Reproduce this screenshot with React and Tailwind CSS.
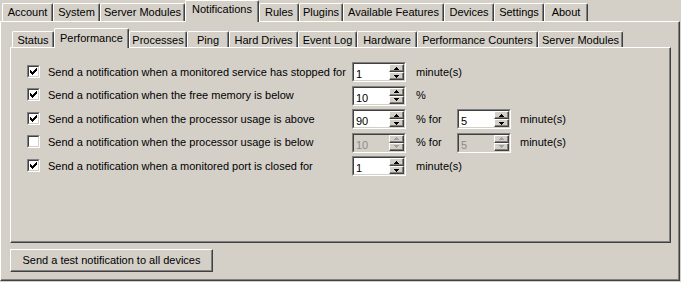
import React from "react";

const FONT = { fontFamily: '"Liberation Sans", Arial, sans-serif' };

function Tab({ label, w, selected, small }) {
  const base =
    "flex justify-center border-t border-l border-r border-t-white border-l-white border-r-[#404040] rounded-tl-[2px] rounded-tr-[2px] shadow-[inset_-1px_0_0_#808080] bg-[#d4d0c8] whitespace-nowrap text-black";
  if (selected) {
    return (
      <div
        className={`${base} relative z-10 -mb-px ${small ? "h-[20px] pt-[3px]" : "h-[22px] pt-[2px]"}`}
        style={{ width: w }}
      >
        {label}
      </div>
    );
  }
  return (
    <div
      className={`${base} ${small ? "h-[16px] pt-[2px]" : "h-[18px] pt-[2px]"}`}
      style={{ width: w }}
    >
      {label}
    </div>
  );
}

function Check({ checked }) {
  const px = [
    [6, 0], [5, 1], [6, 1], [0, 2], [4, 2], [5, 2], [6, 2],
    [0, 3], [1, 3], [3, 3], [4, 3], [5, 3],
    [0, 4], [1, 4], [2, 4], [3, 4], [4, 4],
    [1, 5], [2, 5], [3, 5], [2, 6],
  ];
  return (
    <div className="w-[13px] h-[13px] shrink-0 border border-t-[#808080] border-l-[#808080] border-r-white border-b-white">
      <div className="w-full h-full bg-white border border-t-[#404040] border-l-[#404040] border-r-[#d4d0c8] border-b-[#d4d0c8] flex items-center justify-center">
        {checked && (
          <svg width="7" height="7" viewBox="0 0 7 7" shapeRendering="crispEdges">
            {px.map(([x, y], i) => (
              <rect key={i} x={x} y={y} width="1" height="1" fill="#000" />
            ))}
          </svg>
        )}
      </div>
    </div>
  );
}

function SpinBtn({ up, disabled }) {
  const c = disabled ? "#a0a0a0" : "#000";
  return (
    <div className="h-[8px] w-[15px] border border-t-white border-l-white border-r-[#404040] border-b-[#404040] bg-[#d4d0c8] shadow-[inset_-1px_-1px_0_#808080] flex items-center justify-center">
      <svg width="5" height="3" viewBox="0 0 5 3" shapeRendering="crispEdges">
        {up ? (
          <>
            <rect x="2" y="0" width="1" height="1" fill={c} />
            <rect x="1" y="1" width="3" height="1" fill={c} />
            <rect x="0" y="2" width="5" height="1" fill={c} />
          </>
        ) : (
          <>
            <rect x="0" y="0" width="5" height="1" fill={c} />
            <rect x="1" y="1" width="3" height="1" fill={c} />
            <rect x="2" y="2" width="1" height="1" fill={c} />
          </>
        )}
      </svg>
    </div>
  );
}

function Spinner({ value, disabled }) {
  return (
    <div className="w-[54px] h-[20px] shrink-0 border border-t-[#808080] border-l-[#808080] border-r-white border-b-white">
      <div
        className={`w-full h-full flex items-stretch border border-t-[#404040] border-l-[#404040] border-r-[#d4d0c8] border-b-[#d4d0c8] ${disabled ? "bg-[#d4d0c8]" : "bg-white"}`}
      >
        <div
          className={`flex-1 pl-[2px] pt-[3px] leading-[14px] ${disabled ? "text-[#8a8a8a]" : "text-black"}`}
        >
          {value}
        </div>
        <div className="flex flex-col">
          <SpinBtn up disabled={disabled} />
          <SpinBtn disabled={disabled} />
        </div>
      </div>
    </div>
  );
}

function Row({ checked, label, v1, mid, v2, tail, disabled }) {
  return (
    <div className="flex items-center h-[20px]">
      <div className="w-[13px] -mt-[2px]">
        <Check checked={checked} />
      </div>
      <div className="ml-[8px] w-[304px] whitespace-nowrap">{label}</div>
      <Spinner value={v1} disabled={disabled} />
      <div className="ml-[10px] w-[41px] whitespace-nowrap">{mid}</div>
      {v2 !== undefined && <Spinner value={v2} disabled={disabled} />}
      {tail && <div className="ml-[9px] whitespace-nowrap">{tail}</div>}
    </div>
  );
}

export default function App() {
  const outer = [
    ["Account", 51],
    ["System", 47],
    ["Server Modules", 85],
    ["Notifications", 74, true],
    ["Rules", 40],
    ["Plugins", 44],
    ["Available Features", 101],
    ["Devices", 50],
    ["Settings", 50],
    ["About", 44],
  ];
  const inner = [
    ["Status", 42],
    ["Performance", 75, true],
    ["Processes", 58],
    ["Ping", 42],
    ["Hard Drives", 69],
    ["Event Log", 59],
    ["Hardware", 60],
    ["Performance Counters", 121],
    ["Server Modules", 85],
  ];
  return (
    <div
      className="w-[681px] h-[282px] bg-[#d4d0c8] text-[11px] leading-[13px] text-black overflow-hidden"
      style={FONT}
    >
      <div className="flex items-end h-[21px] pl-[2px]">
        {outer.map(([l, w, s]) => (
          <Tab key={l} label={l} w={w} selected={s} />
        ))}
      </div>
      <div className="w-[680px] h-[260px] border-t border-l border-t-white border-l-white border-r border-b border-r-[#404040] border-b-[#404040] shadow-[inset_-1px_-1px_0_#808080]">
        <div className="flex items-end h-[19px] mt-[6px] ml-[11px]">
          {inner.map(([l, w, s]) => (
            <Tab key={l} label={l} w={w} selected={s} small />
          ))}
        </div>
        <div className="ml-[9px] w-[661px] h-[196px] border-t border-l border-t-white border-l-white border-r border-b border-r-[#404040] border-b-[#404040] shadow-[inset_-1px_-1px_0_#808080] pt-[14px] pl-[16px] flex flex-col gap-[3.5px]">
          <Row checked label="Send a notification when a monitored service has stopped for" v1="1" mid="minute(s)" />
          <Row checked label="Send a notification when the free memory is below" v1="10" mid="%" />
          <Row checked label="Send a notification when the processor usage is above" v1="90" mid="% for" v2="5" tail="minute(s)" />
          <Row label="Send a notification when the processor usage is below" v1="10" mid="% for" v2="5" tail="minute(s)" disabled />
          <Row checked label="Send a notification when a monitored port is closed for" v1="1" mid="minute(s)" />
        </div>
        <div className="ml-[9px] mt-[6px] w-[203px] h-[23px] border border-t-white border-l-white border-r-[#404040] border-b-[#404040] shadow-[inset_-1px_-1px_0_#808080] flex items-center justify-center whitespace-nowrap">
          Send a test notification to all devices
        </div>
      </div>
    </div>
  );
}
